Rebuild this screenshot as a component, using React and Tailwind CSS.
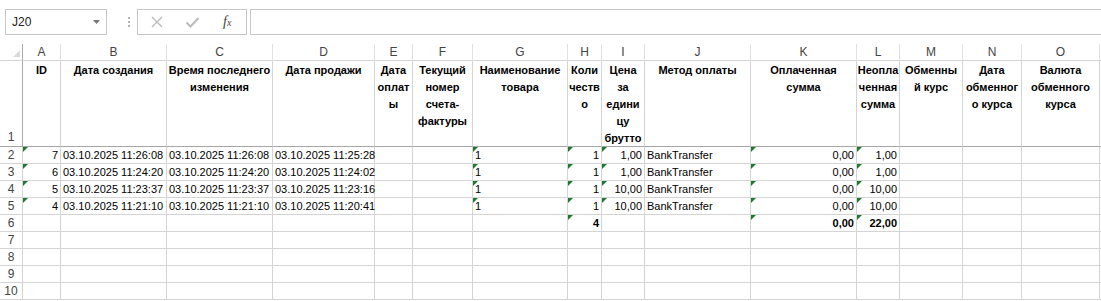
import React from 'react';

const cols = ['A', 'B', 'C', 'D', 'E', 'F', 'G', 'H', 'I', 'J', 'K', 'L', 'M', 'N', 'O', ''];
const keys = ['a', 'b', 'c', 'd', 'e', 'f', 'g', 'h', 'i', 'j', 'k', 'l', 'm', 'n', 'o', 'z'];

const headers = {
  a: ['ID'],
  b: ['Дата создания'],
  c: ['Время последнего', 'изменения'],
  d: ['Дата продажи'],
  e: ['Дата', 'оплат', 'ы'],
  f: ['Текущий', 'номер', 'счета-', 'фактуры'],
  g: ['Наименование', 'товара'],
  h: ['Коли', 'честв', 'о'],
  i: ['Цена', 'за', 'едини', 'цу', 'брутто'],
  j: ['Метод оплаты'],
  k: ['Оплаченная', 'сумма'],
  l: ['Неопла', 'ченная', 'сумма'],
  m: ['Обменны', 'й курс'],
  n: ['Дата', 'обменног', 'о курса'],
  o: ['Валюта', 'обменного', 'курса'],
};

// right aligned (numbers) columns
const right = { a: true, h: true, i: true, k: true, l: true };

const rows = [
  { num: 2, cells: { a: '7', b: '03.10.2025 11:26:08', c: '03.10.2025 11:26:08', d: '03.10.2025 11:25:28', g: '1', h: '1', i: '1,00', j: 'BankTransfer', k: '0,00', l: '1,00' }, tri: ['a', 'g', 'h', 'i', 'k', 'l'] },
  { num: 3, cells: { a: '6', b: '03.10.2025 11:24:20', c: '03.10.2025 11:24:20', d: '03.10.2025 11:24:02', g: '1', h: '1', i: '1,00', j: 'BankTransfer', k: '0,00', l: '1,00' }, tri: ['a', 'g', 'h', 'i', 'k', 'l'] },
  { num: 4, cells: { a: '5', b: '03.10.2025 11:23:37', c: '03.10.2025 11:23:37', d: '03.10.2025 11:23:16', g: '1', h: '1', i: '10,00', j: 'BankTransfer', k: '0,00', l: '10,00' }, tri: ['a', 'g', 'h', 'i', 'k', 'l'] },
  { num: 5, cells: { a: '4', b: '03.10.2025 11:21:10', c: '03.10.2025 11:21:10', d: '03.10.2025 11:20:41', g: '1', h: '1', i: '10,00', j: 'BankTransfer', k: '0,00', l: '10,00' }, tri: ['a', 'g', 'h', 'i', 'k', 'l'] },
  { num: 6, cells: { h: '4', k: '0,00', l: '22,00' }, bold: true, tri: ['h', 'k', 'l'] },
  { num: 7, cells: {}, tri: [] },
  { num: 8, cells: {}, tri: [] },
  { num: 9, cells: {}, tri: [] },
  { num: 10, cells: {}, tri: [] },
];

function Triangle() {
  return (
    <svg className="absolute top-0 left-0" width="5" height="5" viewBox="0 0 5 5">
      <polygon points="0,0 5,0 0,5" fill="#1b7a2e" />
    </svg>
  );
}

function TopBar() {
  return (
    <div className="h-[44px] flex items-start pt-[9px]">
      <div className="ml-[5px] w-[102px] h-[26px] border border-[#c6c6c6] flex items-center justify-between pl-[6px] pr-[6px]">
        <span className="text-[12px] text-[#222]">J20</span>
        <svg width="7" height="4" viewBox="0 0 7 4">
          <polygon points="0,0 7,0 3.5,4" fill="#777" />
        </svg>
      </div>
      <div className="ml-[14px] w-[16px] h-[26px] flex flex-col items-center justify-center gap-[2px]">
        <div className="w-[2px] h-[2px] bg-[#b4b4b4]" />
        <div className="w-[2px] h-[2px] bg-[#b4b4b4]" />
        <div className="w-[2px] h-[2px] bg-[#b4b4b4]" />
      </div>
      <div className="w-[110px] h-[26px] border border-[#c6c6c6] flex items-center">
        <svg className="ml-[12px]" width="14" height="14" viewBox="0 0 14 14">
          <path d="M2 2 L12 12 M12 2 L2 12" stroke="#bcbcbc" strokeWidth="1.4" fill="none" />
        </svg>
        <svg className="ml-[21px]" width="15" height="14" viewBox="0 0 15 14">
          <path d="M1.5 7.5 L5.5 11.5 L13.5 3" stroke="#bcbcbc" strokeWidth="2" fill="none" />
        </svg>
        <span className="ml-[23px] font-['Liberation_Serif',serif] italic text-[#444] leading-none">
          <span className="text-[14px]">f</span>
          <span className="text-[10px]">x</span>
        </span>
      </div>
      <div className="ml-[3px] flex-1 h-[26px] border border-[#c6c6c6] border-r-0" />
    </div>
  );
}

export default function App() {
  return (
    <div className="w-[1101px] h-[301px] overflow-hidden bg-white font-['Liberation_Sans',Arial,sans-serif] text-[11px] text-black">
      <TopBar />
      <div className="grid grid-cols-[23px_38px_106px_106px_102px_38px_60px_95px_34px_43px_106px_106px_43px_63px_59px_78px_1fr]">
        {/* column letters */}
        <div className="relative h-[17px] border-r border-[#ababab] border-b border-b-[#d4d4d4]">
          <svg className="absolute right-[2px] bottom-[3px]" width="7" height="7" viewBox="0 0 7 7">
            <polygon points="7,0 7,7 0,7" fill="#dadada" />
          </svg>
        </div>
        {cols.map((c, i) => (
          <div key={i} className="h-[17px] border-r border-[#e1e1e1] border-b border-b-[#d4d4d4] text-center text-[12px] leading-[16px] text-[#444]">
            {c}
          </div>
        ))}

        {/* row 1: headers */}
        <div className="h-[86px] border-r border-[#ababab] border-b border-b-[#a6a6a6] flex items-end justify-center text-[12px] leading-[17px] text-[#444]">
          1
        </div>
        {keys.map((k) => (
          <div key={k} className="h-[86px] border-r border-[#d4d4d4] border-b border-b-[#a6a6a6] pt-[1px] text-center font-bold leading-[17px] whitespace-nowrap">
            {(headers[k] || []).map((line, i) => (
              <div key={i}>{line}</div>
            ))}
          </div>
        ))}

        {/* data rows */}
        {rows.map((r) => (
          <React.Fragment key={r.num}>
            <div className="h-[17px] border-r border-[#ababab] border-b border-[#d4d4d4] text-center text-[12px] leading-[16px] text-[#444]">
              {r.num}
            </div>
            {keys.map((k) => (
              <div
                key={k}
                className={
                  'relative h-[17px] border-r border-b border-[#d4d4d4] px-[2px] leading-[16px] whitespace-nowrap ' +
                  (right[k] ? 'text-right ' : 'text-left ') +
                  (r.bold ? 'font-bold' : '')
                }
              >
                {r.tri.includes(k) ? <Triangle /> : null}
                {r.cells[k] || ''}
              </div>
            ))}
          </React.Fragment>
        ))}
      </div>
    </div>
  );
}
